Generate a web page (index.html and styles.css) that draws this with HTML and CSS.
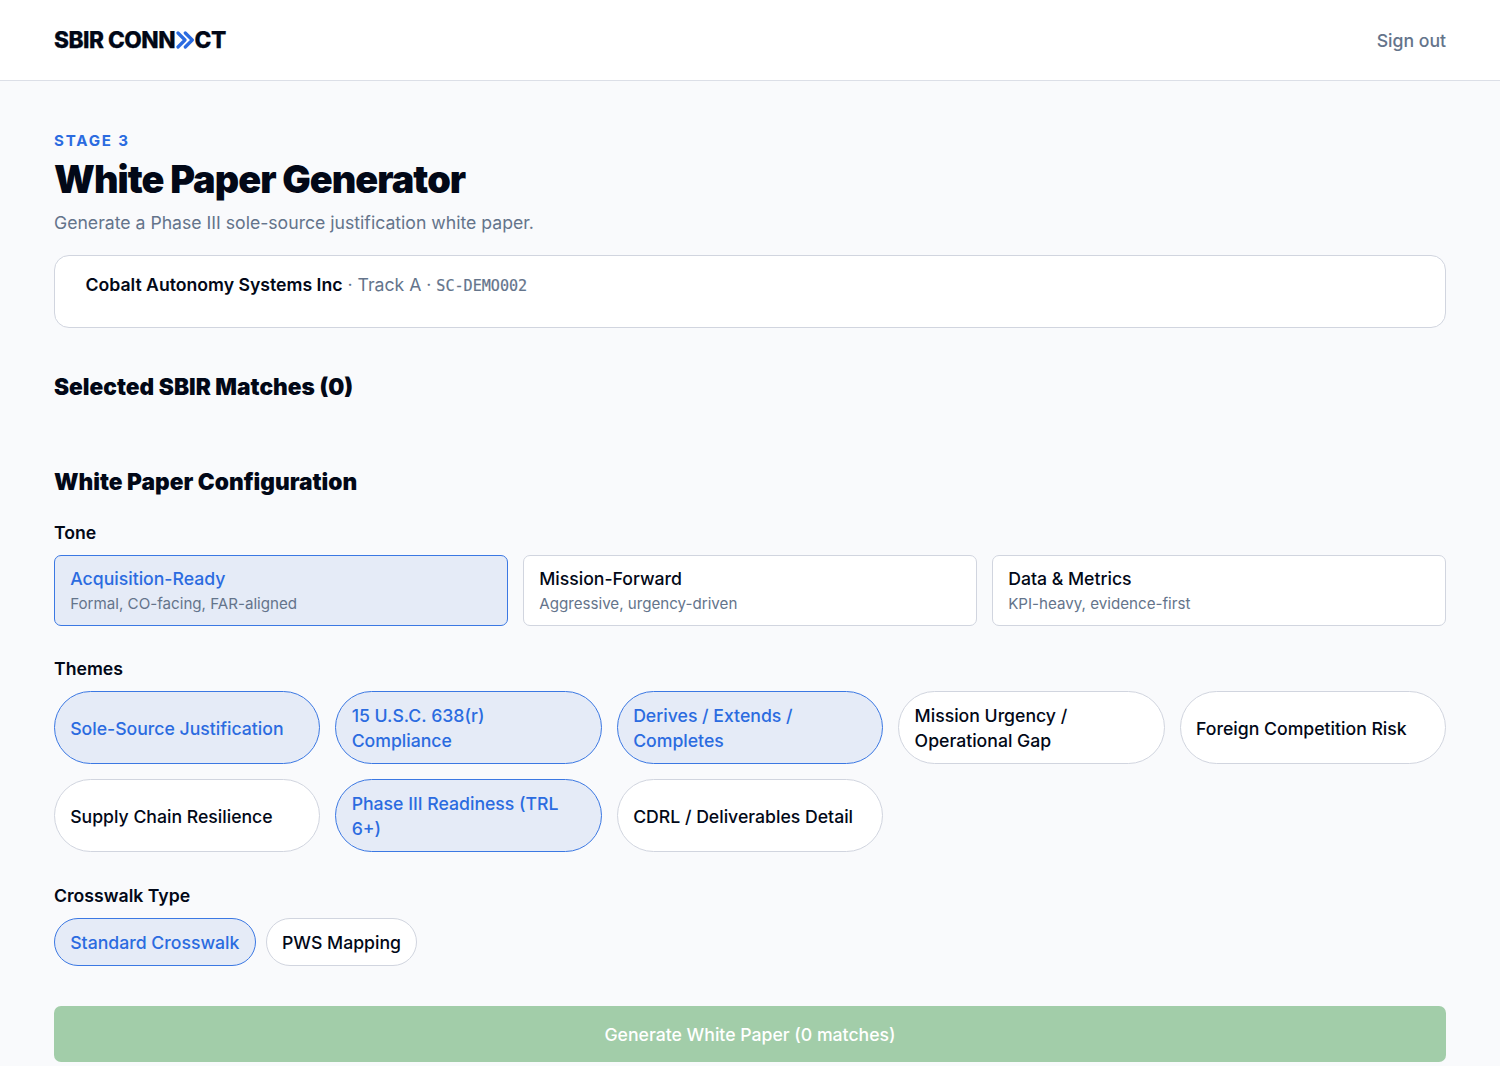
FILE: index.html
```html
<!DOCTYPE html>
<html lang="en">
<head>
<meta charset="utf-8">
<title>White Paper Generator</title>
<link rel="stylesheet" href="styles.css">
</head>
<body>
<header class="topbar">
  <a class="logo" aria-label="SBIR Connect"><span>SBIR CONN</span><svg class="logo-mark" viewBox="0 0 18 18" fill="none" stroke="currentColor" stroke-linecap="round" stroke-linejoin="round"><path d="M2 2 9 9 2 16"/><path d="M9.3 2 16.3 9 9.3 16"/></svg><span>CT</span></a>
  <a class="signout">Sign out</a>
</header>
<main class="page">
  <p class="eyebrow">STAGE 3</p>
  <h1 class="title">White Paper Generator</h1>
  <p class="subtitle">Generate a Phase III sole-source justification white paper.</p>
  <section class="company"><strong class="company-name">Cobalt Autonomy Systems Inc</strong> · Track A · <span class="company-id">SC-DEMO002</span></section>
  <h2 class="heading heading-matches">Selected SBIR Matches (0)</h2>
  <h2 class="heading heading-config">White Paper Configuration</h2>

  <h3 class="label">Tone</h3>
  <div class="tones">
    <button class="option tone selected"><span class="tone-name">Acquisition-Ready</span><span class="tone-note">Formal, CO-facing, FAR-aligned</span></button>
    <button class="option tone"><span class="tone-name">Mission-Forward</span><span class="tone-note">Aggressive, urgency-driven</span></button>
    <button class="option tone"><span class="tone-name">Data &amp; Metrics</span><span class="tone-note">KPI-heavy, evidence-first</span></button>
  </div>

  <h3 class="label">Themes</h3>
  <div class="themes">
    <button class="option pill selected">Sole-Source Justification</button>
    <button class="option pill selected">15 U.S.C. 638(r) Compliance</button>
    <button class="option pill selected">Derives / Extends / Completes</button>
    <button class="option pill">Mission Urgency / Operational Gap</button>
    <button class="option pill">Foreign Competition Risk</button>
    <button class="option pill">Supply Chain Resilience</button>
    <button class="option pill selected">Phase III Readiness (TRL 6+)</button>
    <button class="option pill">CDRL / Deliverables Detail</button>
  </div>

  <h3 class="label">Crosswalk Type</h3>
  <div class="crosswalks">
    <button class="option pill selected">Standard Crosswalk</button>
    <button class="option pill">PWS Mapping</button>
  </div>

  <button class="generate" disabled>Generate White Paper (0 matches)</button>
</main>
</body>
</html>
```
FILE: styles.css
```css
* { box-sizing: border-box; }
body {
  margin: 0;
  height: 1066px;
  overflow: hidden;
  background: #f9fafc;
  color: #020817;
  font-family: Inter, "Liberation Sans", sans-serif;
  font-size: 17.65px;
  line-height: 25px;
}
h1, h2, h3, p { margin: 0; }
button { font: inherit; color: inherit; margin: 0; }

.topbar {
  height: 81px;
  padding: 0 54px;
  display: flex;
  align-items: center;
  justify-content: space-between;
  background: #fff;
  border-bottom: 1px solid #dcdfe7;
}
.logo {
  display: flex;
  align-items: center;
  font-size: 22.7px;
  line-height: 26px;
  font-weight: 800;
  letter-spacing: -0.52px;
  -webkit-text-stroke: 0.25px currentColor;
}
.logo-mark { width: 18px; height: 18px; color: #2b6be0; margin-left: 0.6px; margin-right: 1px; stroke-width: 3.2; }
.signout { color: #64748b; font-weight: 500; padding-top: 1px; }

.page { padding: 47px 54px 0; }
.eyebrow {
  color: #2b6be0;
  font-size: 15.1px;
  line-height: 26px;
  font-weight: 700;
  letter-spacing: 1.82px;
}
.title {
  font-size: 37.8px;
  line-height: 45px;
  font-weight: 900;
  letter-spacing: -0.945px;
  margin-top: 3px;
}
.subtitle { color: #64748b; margin-top: 8px; }
.company {
  height: 73px;
  margin-top: 20px;
  padding: 15.5px 30.5px;
  border: 1px solid #d1d5df;
  border-radius: 15px;
  background: #fff;
  color: #64748b;
}
.company-name { color: #020817; font-weight: 600; }
.company-id { font-family: "DejaVu Sans Mono", monospace; font-size: 15.1px; line-height: 1; -webkit-text-stroke: 0.2px currentColor; }
.heading { font-size: 22.7px; line-height: 30px; font-weight: 900; }
.heading-matches { margin-top: 44px; }
.heading-config { margin-top: 65px; margin-bottom: 23px; }
.label { font-size: 17.65px; font-weight: 600; margin-bottom: 10px; }

.option {
  background: #fff;
  border: 1px solid #d1d5df;
  text-align: left;
  font-weight: 500;
}
.option.selected { background: #e5ebf7; border-color: #3b78e3; color: #2b6be0; }
.tones { display: grid; grid-template-columns: repeat(3, 1fr); gap: 15px; margin-bottom: 30px; }
.tone {
  height: 71px;
  padding: 1px 15.2px 0;
  border-radius: 7px;
  display: flex;
  flex-direction: column;
  justify-content: center;
}
.tone-note { color: #64748b; font-size: 15.15px; font-weight: 400; line-height: 25px; }
.themes {
  display: grid;
  grid-template-columns: repeat(5, 1fr);
  grid-auto-rows: 73px;
  gap: 15.4px;
  margin-bottom: 30.6px;
}
.pill { border-radius: 40px; padding: 1px 15.2px 0; }
.crosswalks { display: flex; gap: 10.3px; margin-bottom: 40px; }
.crosswalks .pill { height: 48px; }
.generate {
  display: block;
  width: 100%;
  height: 56px;
  border: 0;
  border-radius: 7px;
  padding: 1px 0 0;
  background: #a2cda9;
  color: #fff;
  font-weight: 500;
}
```
